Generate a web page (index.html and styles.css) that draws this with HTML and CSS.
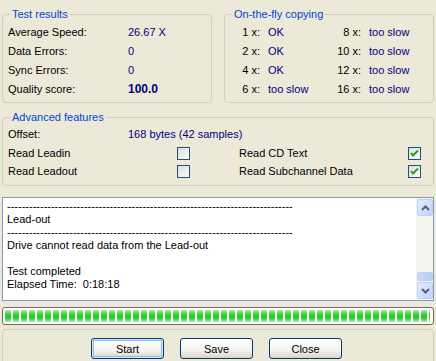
FILE: index.html
```html
<!DOCTYPE html>
<html lang="en">
<head>
    <meta charset="UTF-8">
    <link rel="stylesheet" href="styles.css">
    <title>Read Test</title>
</head>
<body>
    <div class="dialog">
        <div class="top">
            <fieldset class="group results">
                <legend>Test results</legend>
                <div class="row"><span class="label">Average Speed:</span><span class="value">26.67 X</span></div>
                <div class="row"><span class="label">Data Errors:</span><span class="value">0</span></div>
                <div class="row"><span class="label">Sync Errors:</span><span class="value">0</span></div>
                <div class="row"><span class="label">Quality score:</span><span class="value score">100.0</span></div>
            </fieldset>

            <fieldset class="group fly">
                <legend>On-the-fly copying</legend>
                <div class="fly-grid">
                    <span class="speed">1 x:</span><span class="value">OK</span>
                    <span class="speed">8 x:</span><span class="value">too slow</span>
                    <span class="speed">2 x:</span><span class="value">OK</span>
                    <span class="speed">10 x:</span><span class="value">too slow</span>
                    <span class="speed">4 x:</span><span class="value">OK</span>
                    <span class="speed">12 x:</span><span class="value">too slow</span>
                    <span class="speed">6 x:</span><span class="value">too slow</span>
                    <span class="speed">16 x:</span><span class="value">too slow</span>
                </div>
            </fieldset>
        </div>

        <fieldset class="group advanced">
            <legend>Advanced features</legend>
            <div class="row offset"><span class="label">Offset:</span><span class="value">168 bytes (42 samples)</span></div>
            <div class="check-grid">
                <span>Read Leadin</span><span class="check"></span>
                <span></span>
                <span>Read CD Text</span>
                <span class="check on"><svg width="11" height="11" viewBox="0 0 11 11"><polyline points="2,5 4,7.5 9,2.5" fill="none" stroke="#21a121" stroke-width="2"/></svg></span>
                <span>Read Leadout</span><span class="check"></span>
                <span></span>
                <span>Read Subchannel Data</span>
                <span class="check on"><svg width="11" height="11" viewBox="0 0 11 11"><polyline points="2,5 4,7.5 9,2.5" fill="none" stroke="#21a121" stroke-width="2"/></svg></span>
            </div>
        </fieldset>

        <div class="log">
            <div class="log-text">------------------------------------------------------------------------------
Lead-out
------------------------------------------------------------------------------
Drive cannot read data from the Lead-out

Test completed
Elapsed Time:  0:18:18</div>
            <div class="scrollbar">
                <div class="sb-btn"><svg width="9" height="6" viewBox="0 0 9 6"><polyline points="1,5 4.5,1.5 8,5" fill="none" stroke="#4d6185" stroke-width="2"/></svg></div>
                <div class="sb-track"><div class="sb-thumb"></div></div>
                <div class="sb-btn"><svg width="9" height="6" viewBox="0 0 9 6"><polyline points="1,1 4.5,4.5 8,1" fill="none" stroke="#4d6185" stroke-width="2"/></svg></div>
            </div>
        </div>

        <div class="progress"><div class="progress-fill"></div></div>

        <div class="footer">
            <button class="btn default">Start</button>
            <button class="btn">Save</button>
            <button class="btn">Close</button>
        </div>
    </div>
</body>
</html>
```

FILE: styles.css
```css
html, body {
    margin: 0;
    padding: 0;
    background-color: #ece9d8;
    font-family: 'Liberation Sans', Arial, sans-serif;
    font-size: 11px;
    color: #000;
}

.dialog {
    width: 432px;
    height: 361px;
    padding: 0 2px;
    overflow: hidden;
    display: flex;
    flex-direction: column;
}

.top {
    display: flex;
    gap: 12px;
    margin-top: 8px;
}

.group {
    margin: 0;
    padding: 2px 5px 3px;
    border: 1px solid #d0d0bf;
    border-radius: 4px;
    min-width: 0;
}

.group legend {
    padding: 0 2px;
    margin-left: 2px;
    line-height: 13px;
    color: #0046d5;
}

.results, .fly {
    width: 210px;
    box-sizing: border-box;
}

.row {
    display: flex;
    height: 19px;
    line-height: 19px;
}

.label {
    width: 120px;
}

.value {
    color: #000080;
}

.score {
    font-weight: bold;
    font-size: 12px;
}

.fly {
    padding-left: 0;
}

.fly legend {
    margin-left: 7px;
}

.fly-grid {
    display: grid;
    grid-template-columns: 35px 50px 35px 1fr;
    column-gap: 8px;
    grid-auto-rows: 19px;
    line-height: 19px;
}

.speed {
    text-align: right;
}

.advanced {
    margin-top: 8px;
    padding: 1px 5px 5px;
}

.check-grid {
    display: grid;
    grid-template-columns: 169px 13px 49px 169px 13px;
    grid-auto-rows: 18px;
    align-items: center;
}

.check {
    width: 13px;
    height: 13px;
    box-sizing: border-box;
    border: 1px solid #1c5180;
    background: linear-gradient(135deg, #dcdcd7, #fdfdfb);
    display: flex;
    align-items: center;
    justify-content: center;
}

.log {
    margin-top: 11px;
    height: 104px;
    box-sizing: border-box;
    border: 1px solid #7f9db9;
    background-color: #fff;
    display: flex;
}

.log-text {
    flex: 1;
    padding: 2px 4px 0;
    line-height: 13px;
    white-space: pre;
    overflow: hidden;
}

.scrollbar {
    width: 17px;
    display: flex;
    flex-direction: column;
    background-color: #f4f3ee;
    padding: 1px 0 1px 1px;
    box-sizing: border-box;
}

.sb-btn {
    height: 17px;
    box-sizing: border-box;
    border: 1px solid #bcd0f6;
    border-radius: 2px;
    background: linear-gradient(135deg, #e4ecfd, #c1d3fb);
    display: flex;
    align-items: center;
    justify-content: center;
}

.sb-track {
    flex: 1;
    display: flex;
    flex-direction: column;
    justify-content: flex-end;
}

.sb-thumb {
    height: 7px;
    margin-bottom: 1px;
    border: 1px solid #bcd0f6;
    border-radius: 2px;
    background: linear-gradient(to right, #cbdafc, #b8ccf9);
}

.progress {
    margin-top: 6px;
    height: 18px;
    box-sizing: border-box;
    border: 1px solid #686868;
    border-radius: 3px;
    background-color: #fff;
    padding: 2px 3px 2px 2px;
}

.progress-fill {
    height: 100%;
    background:
        repeating-linear-gradient(to right, transparent 0 6px, #fff 6px 8px),
        linear-gradient(to bottom, #aeeeae 0%, #35d235 35%, #28c828 65%, #aeeeae 100%);
}

.footer {
    margin-top: 4px;
    flex: 1;
    border: 1px solid #d0d0bf;
    border-bottom: none;
    border-radius: 4px 4px 0 0;
    padding: 8px 0 0 88px;
    display: flex;
    gap: 16px;
    align-items: flex-start;
}

.btn {
    width: 73px;
    height: 21px;
    box-sizing: border-box;
    border: 1px solid #003c74;
    border-radius: 3px;
    background: linear-gradient(to bottom, #ffffff, #f4f3ee 60%, #d8d4c8);
    font-family: 'Liberation Sans', Arial, sans-serif;
    font-size: 11px;
    color: #000;
    padding: 0;
    cursor: pointer;
}

.btn.default {
    box-shadow: inset 0 0 0 1px #cee7ff, inset 0 0 0 2px #98b8ea;
}
```
